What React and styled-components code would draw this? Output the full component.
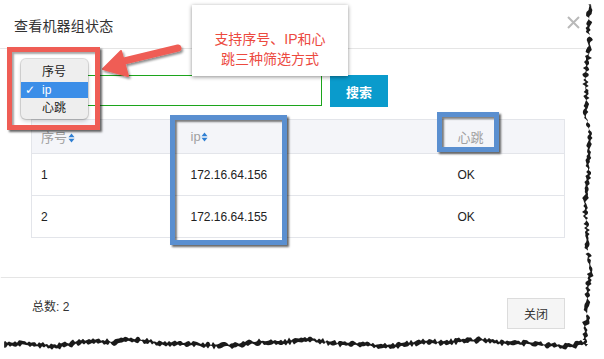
import React from 'react';
import styled, { createGlobalStyle } from 'styled-components';

const GlobalStyle = createGlobalStyle`
  html, body {
    margin: 0;
    padding: 0;
    background: #fff;
  }
  body {
    font-family: "Liberation Sans", "Noto Sans CJK SC", Arial, sans-serif;
    color: #333;
  }
`;

// deterministic jitter for the torn paper edge
const jitter = (i) => {
  const v = Math.sin(i * 127.1 + 311.7) * 43758.5453;
  return v - Math.floor(v);
};

const buildTornEdge = () => {
  const pts = ['0px 0px', '588px 0px'];
  for (let y = 2; y <= 340; y += 2) {
    const x =
      586 +
      (jitter(y) - 0.5) * 4 +
      Math.sin(y / 19) * 2.2 +
      Math.sin(y / 7 + 1) * 0.8;
    pts.push(`${x.toFixed(1)}px ${y}px`);
  }
  for (let x = 585; x >= 0; x -= 2) {
    const y =
      341 +
      (jitter(x + 1000) - 0.5) * 4 +
      Math.sin(x / 27) * 2.2 +
      Math.sin(x / 9 + 2) * 0.9;
    pts.push(`${x}px ${y.toFixed(1)}px`);
  }
  return `polygon(${pts.join(', ')})`;
};

const TORN = buildTornEdge();

const rows = [
  { id: 1, ip: '172.16.64.156', beat: 'OK' },
  { id: 2, ip: '172.16.64.155', beat: 'OK' },
];

function SortIcon() {
  return (
    <svg width="7" height="10" viewBox="0 0 7 10">
      <path d="M3.5 0.5 L6.5 4.3 H0.5 Z" fill="#2f7fd3" />
      <path d="M3.5 9.5 L6.5 5.7 H0.5 Z" fill="#2f7fd3" />
    </svg>
  );
}

function CloseIcon() {
  return (
    <svg width="13" height="13" viewBox="0 0 13 13">
      <path d="M1 1 L12 12 M12 1 L1 12" stroke="#b9b9b9" strokeWidth="2" />
    </svg>
  );
}

function App() {
  return (
    <>
      <GlobalStyle />
      <Page>
        <PaperShadow />
        <Paper>
          <Header>
            <Title>查看机器组状态</Title>
            <CloseButton>
              <CloseIcon />
            </CloseButton>
          </Header>
          <Body>
            <SearchRow>
              <SearchInput />
              <SearchButton>搜索</SearchButton>
            </SearchRow>
            <Table>
              <colgroup>
                <col style={{ width: 150 }} />
                <col style={{ width: 267 }} />
                <col />
              </colgroup>
              <thead>
                <tr>
                  <Th>
                    序号 <SortIcon />
                  </Th>
                  <Th>
                    ip <SortIcon />
                  </Th>
                  <Th>心跳</Th>
                </tr>
              </thead>
              <tbody>
                {rows.map((row) => (
                  <tr key={row.id}>
                    <Td>{row.id}</Td>
                    <Td>{row.ip}</Td>
                    <Td>{row.beat}</Td>
                  </tr>
                ))}
              </tbody>
            </Table>
          </Body>
          <Footer>
            <Total>总数: 2</Total>
            <CloseBtn>关闭</CloseBtn>
          </Footer>
        </Paper>

        <Callout>
          支持序号、IP和心
          <br />
          跳三种筛选方式
        </Callout>

        <Arrow width="604" height="359" viewBox="0 0 604 359">
          <defs>
            <filter id="arrowShadow" x="-20%" y="-20%" width="140%" height="140%">
              <feDropShadow dx="1.5" dy="2" stdDeviation="1" floodColor="#000" floodOpacity="0.45" />
            </filter>
          </defs>
          <g filter="url(#arrowShadow)">
            <line x1="178" y1="48" x2="120" y2="62" stroke="#ef5d55" strokeWidth="7" strokeLinecap="round" />
            <path d="M103 69 L121 51 L128 76 Z" fill="#ef5d55" stroke="#ef5d55" strokeWidth="2" strokeLinejoin="round" />
          </g>
        </Arrow>

        <RedFrame />
        <Dropdown>
          <Option>序号</Option>
          <Option $selected>
            <Check>✓</Check>ip
          </Option>
          <Option>心跳</Option>
        </Dropdown>

        <BlueFrame $x={170} $y={115} $w={117} $h={130} />
        <BlueFrame $x={437} $y={112} $w={62} $h={40} />
      </Page>
    </>
  );
}

export default App;

const Page = styled.div`
  position: relative;
  width: 604px;
  height: 359px;
  overflow: hidden;
  background: #fff;
`;

const PaperShadow = styled.div`
  position: absolute;
  left: 3px;
  top: 4px;
  width: 595px;
  height: 348px;
  background: #1a1a1a;
  clip-path: ${TORN};
  filter: blur(1.4px);
`;

const Paper = styled.div`
  position: relative;
  width: 595px;
  height: 348px;
  background: #fff;
  clip-path: ${TORN};
  display: flex;
  flex-direction: column;
`;

const Header = styled.div`
  height: 48px;
  display: flex;
  align-items: center;
  justify-content: space-between;
  padding: 0 15px 0 14px;
  border-bottom: 1px solid #e5e5e5;
`;

const Title = styled.div`
  font-size: 14px;
  letter-spacing: 0.2px;
  color: #333;
  margin-top: 1px;
`;

const CloseButton = styled.div`
  display: flex;
  margin-top: -3px;
`;

const Body = styled.div`
  padding: 26px 30px 0 31px;
  height: 202px;
  border-bottom: 1px solid #e5e5e5;
`;

const SearchRow = styled.div`
  display: flex;
  gap: 8px;
`;

const SearchInput = styled.div`
  width: 291px;
  height: 31px;
  box-sizing: border-box;
  border: 1px solid #1ca51c;
  background: #fff;
`;

const SearchButton = styled.div`
  width: 58px;
  height: 32px;
  background: #0a9bcc;
  color: #fff;
  font-weight: bold;
  font-size: 13px;
  display: flex;
  align-items: center;
  justify-content: center;
`;

const Table = styled.table`
  margin-top: 12px;
  width: 534px;
  border-collapse: collapse;
  table-layout: fixed;
  border: 1px solid #e3e5ea;
`;

const Th = styled.th`
  height: 33px;
  padding: 0 9px;
  text-align: left;
  font-weight: normal;
  font-size: 13px;
  color: #a0a0a0;
  background: #f4f5f9;
  border-bottom: 1px solid #e3e5ea;
  white-space: nowrap;

  svg {
    margin-left: -3px;
    vertical-align: -1px;
  }
`;

const Td = styled.td`
  height: 41px;
  padding: 0 9px;
  font-size: 12px;
  color: #222;
  border-bottom: 1px solid #e3e5ea;
`;

const Footer = styled.div`
  display: flex;
  align-items: center;
  justify-content: space-between;
  padding: 20px 30px 0 32px;
`;

const Total = styled.div`
  font-size: 12px;
  color: #333;
  margin-top: -16px;
`;

const CloseBtn = styled.div`
  width: 56px;
  height: 29px;
  border: 1px solid #dcdcdc;
  background: #f5f5f5;
  font-size: 12px;
  color: #333;
  display: flex;
  align-items: center;
  justify-content: center;
`;

const Callout = styled.div`
  position: absolute;
  left: 192px;
  top: 5px;
  width: 156px;
  height: 71px;
  box-sizing: border-box;
  padding-top: 24px;
  background: #fff;
  box-shadow: 0 1px 4px rgba(0, 0, 0, 0.45);
  color: #ec4a3f;
  font-size: 14px;
  line-height: 20px;
  text-align: center;
`;

const Arrow = styled.svg`
  position: absolute;
  left: 0;
  top: 0;
  pointer-events: none;
`;

const RedFrame = styled.div`
  position: absolute;
  left: 7px;
  top: 47px;
  width: 93px;
  height: 83px;
  box-sizing: border-box;
  border: 5px solid #ef5d55;
  box-shadow: 2px 2px 2px rgba(0, 0, 0, 0.6), inset 2px 2px 2px rgba(0, 0, 0, 0.35);
`;

const Dropdown = styled.div`
  position: absolute;
  left: 21px;
  top: 59px;
  width: 67px;
  height: 60px;
  box-sizing: border-box;
  padding-top: 5px;
  background: #eeeeee;
  border-radius: 5px;
  box-shadow: 0 0 0 1px rgba(0, 0, 0, 0.12), 0 2px 4px rgba(0, 0, 0, 0.2);
  display: flex;
  flex-direction: column;
`;

const Option = styled.div`
  position: relative;
  height: 16px;
  line-height: 16px;
  padding-left: 21px;
  font-size: 12px;
  color: ${(p) => (p.$selected ? '#fff' : '#222')};
  background: ${(p) => (p.$selected ? '#3b8ee8' : 'transparent')};
  margin-bottom: 2px;
`;

const Check = styled.span`
  position: absolute;
  left: 4px;
  font-size: 12px;
  font-weight: bold;
  font-family: "DejaVu Sans", sans-serif;
`;

const BlueFrame = styled.div`
  position: absolute;
  left: ${(p) => p.$x}px;
  top: ${(p) => p.$y}px;
  width: ${(p) => p.$w}px;
  height: ${(p) => p.$h}px;
  box-sizing: border-box;
  border: 5px solid #5a8fd0;
  box-shadow: 2px 2px 2px rgba(0, 0, 0, 0.6), inset 2px 2px 2px rgba(0, 0, 0, 0.5);
`;
